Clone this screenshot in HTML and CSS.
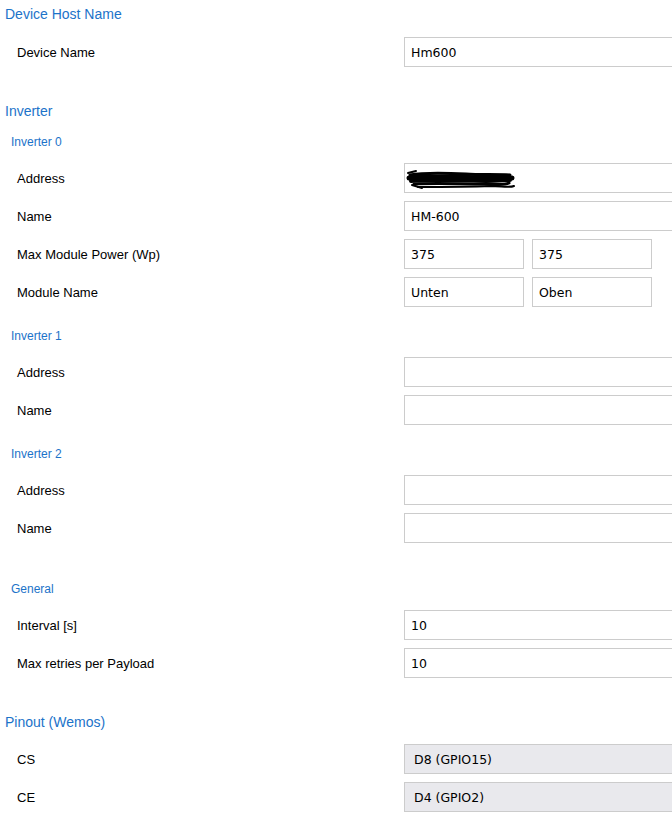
FILE: index.html
```html
<!DOCTYPE html>
<html lang="de">
<head>
<meta charset="utf-8">
<title>Settings</title>
<link rel="stylesheet" href="styles.css">
</head>
<body>
<div class="page">
  <h2 class="sec first">Device Host Name</h2>
  <div class="group">
    <div class="row"><label class="lbl">Device Name</label><input class="inp" value="Hm600"></div>
  </div>

  <h2 class="sec">Inverter</h2>
  <h3 class="sub after-sec">Inverter 0</h3>
  <div class="group">
    <div class="row"><label class="lbl">Address</label>
      <div class="redact-wrap"><input class="inp" value="">
        <svg class="scribble" width="110" height="26" viewBox="0 0 110 26">
          <path d="M4 9 C20 6 40 7 60 8 C75 9 90 8 104 9" stroke="#000" stroke-width="3" fill="none" stroke-linecap="round"/>
          <path d="M3 12 C25 10 50 11 75 12 C88 12 98 11 106 12" stroke="#000" stroke-width="5" fill="none" stroke-linecap="round"/>
          <path d="M5 15 C28 13 55 14 80 15 C92 15 100 14 104 14" stroke="#000" stroke-width="4" fill="none" stroke-linecap="round"/>
          <path d="M8 18 C30 17 55 18 78 18 C90 18 97 20 103 17" stroke="#000" stroke-width="3" fill="none" stroke-linecap="round"/>
          <path d="M12 21 C35 21 60 21 85 20 C95 20 104 22 108 20" stroke="#000" stroke-width="2" fill="none" stroke-linecap="round"/>
          <path d="M2 7 L10 5 M6 19 L16 22" stroke="#000" stroke-width="2" fill="none" stroke-linecap="round"/>
        </svg>
      </div>
    </div>
    <div class="row"><label class="lbl">Name</label><input class="inp" value="HM-600"></div>
    <div class="row"><label class="lbl">Max Module Power (Wp)</label>
      <div class="pair"><input class="inp small" value="375"><input class="inp small" value="375"></div>
    </div>
    <div class="row"><label class="lbl">Module Name</label>
      <div class="pair"><input class="inp small" value="Unten"><input class="inp small" value="Oben"></div>
    </div>
  </div>

  <h3 class="sub">Inverter 1</h3>
  <div class="group">
    <div class="row"><label class="lbl">Address</label><input class="inp" value=""></div>
    <div class="row"><label class="lbl">Name</label><input class="inp" value=""></div>
  </div>

  <h3 class="sub">Inverter 2</h3>
  <div class="group">
    <div class="row"><label class="lbl">Address</label><input class="inp" value=""></div>
    <div class="row"><label class="lbl">Name</label><input class="inp" value=""></div>
  </div>

  <h3 class="sub gap-lg">General</h3>
  <div class="group">
    <div class="row"><label class="lbl">Interval [s]</label><input class="inp" value="10"></div>
    <div class="row"><label class="lbl">Max retries per Payload</label><input class="inp" value="10"></div>
  </div>

  <h2 class="sec">Pinout (Wemos)</h2>
  <div class="group pins">
    <div class="row"><label class="lbl">CS</label><div class="inp sel">D8 (GPIO15)</div></div>
    <div class="row"><label class="lbl">CE</label><div class="inp sel">D4 (GPIO2)</div></div>
  </div>
</div>
</body>
</html>
```

FILE: styles.css
```css
html { overflow: hidden; background: #fff; }
body { margin: 0; font-family: "Liberation Sans", Arial, sans-serif; color: #000; }
.page { width: 720px; }

.sec {
  margin: 35px 0 0 5px;
  font-size: 14px;
  line-height: 18px;
  font-weight: normal;
  color: #1c73c9;
}
.sec.first { margin-top: 5px; }

.sub {
  margin: 21px 0 0 11px;
  font-size: 12px;
  line-height: 16px;
  font-weight: normal;
  color: #1c73c9;
}
.sub.after-sec { margin-top: 14px; }
.sub.gap-lg { margin-top: 38px; }

.group {
  margin-top: 14px;
  display: flex;
  flex-direction: column;
  gap: 8px;
}
.sub + .group { margin-top: 13px; }
.group.pins { margin-top: 13px; }

.row {
  display: flex;
  align-items: center;
  height: 30px;
}
.lbl {
  width: 387px;
  padding-left: 17px;
  padding-top: 2px;
  flex: none;
  font-size: 13px;
  line-height: 16px;
}

.inp {
  box-sizing: border-box;
  width: 310px;
  height: 30px;
  margin: 0;
  border: 1px solid #cccccc;
  border-radius: 0;
  padding: 0 6px;
  background: #fff;
  font-family: "DejaVu Sans", Tahoma, sans-serif;
  font-size: 12.5px;
  color: #000;
  outline: none;
}
.inp.small { width: 120px; }
.pair { display: flex; gap: 8px; }

.sel {
  display: flex;
  align-items: center;
  padding-left: 9px;
  background: #e9e9ed;
}

.redact-wrap { position: relative; }
.scribble {
  position: absolute;
  left: 2px;
  top: 3px;
}
```
